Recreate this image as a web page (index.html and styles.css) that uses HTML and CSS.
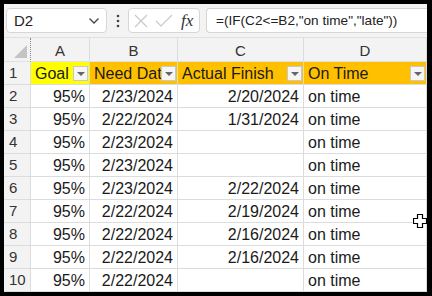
FILE: index.html
```html
<!DOCTYPE html>
<html lang="en">
<head>
  <meta charset="UTF-8">
  <title>On Time Sheet</title>
  <link rel="stylesheet" href="styles.css">
</head>
<body>
  <div class="frame">
    <div class="excel">
      <!-- formula bar -->
      <div class="fbar">
        <div class="namebox">
          <span>D2</span>
          <svg width="12" height="8" viewBox="0 0 12 8"><path d="M1.5 1.5 L6 6 L10.5 1.5" fill="none" stroke="#444" stroke-width="1.3"/></svg>
        </div>
        <div class="dots">
          <svg width="4" height="14" viewBox="0 0 4 14"><circle cx="2" cy="2" r="1.3" fill="#444"/><circle cx="2" cy="7" r="1.3" fill="#444"/><circle cx="2" cy="12" r="1.3" fill="#444"/></svg>
        </div>
        <div class="fbtns">
          <svg width="16" height="16" viewBox="0 0 16 16"><path d="M2 2 L14 14 M14 2 L2 14" stroke="#c8c8c8" stroke-width="1.2"/></svg>
          <svg width="18" height="16" viewBox="0 0 18 16"><path d="M1 8 L6 13 L17 2" fill="none" stroke="#c8c8c8" stroke-width="1.2"/></svg>
          <span class="fx">fx</span>
        </div>
        <div class="formula">=(IF(C2&lt;=B2,"on time","late"))</div>
      </div>

      <!-- sheet grid -->
      <div class="sheet">
        <div class="corner"><div class="tri"></div></div>
        <div class="colhead">A</div>
        <div class="colhead">B</div>
        <div class="colhead">C</div>
        <div class="colhead">D</div>

        <div class="rowhead">1</div>
        <div class="cell th yellow"><span>Goal</span><i class="filter"></i></div>
        <div class="cell th orange"><span>Need Date</span><i class="filter"></i></div>
        <div class="cell th orange"><span>Actual Finish</span><i class="filter"></i></div>
        <div class="cell th orange"><span>On Time</span><i class="filter"></i></div>

        <div class="rowhead">2</div><div class="cell num">95%</div><div class="cell num">2/23/2024</div><div class="cell num">2/20/2024</div><div class="cell">on time</div>
        <div class="rowhead">3</div><div class="cell num">95%</div><div class="cell num">2/22/2024</div><div class="cell num">1/31/2024</div><div class="cell">on time</div>
        <div class="rowhead">4</div><div class="cell num">95%</div><div class="cell num">2/23/2024</div><div class="cell num"></div><div class="cell">on time</div>
        <div class="rowhead">5</div><div class="cell num">95%</div><div class="cell num">2/23/2024</div><div class="cell num"></div><div class="cell">on time</div>
        <div class="rowhead">6</div><div class="cell num">95%</div><div class="cell num">2/23/2024</div><div class="cell num">2/22/2024</div><div class="cell">on time</div>
        <div class="rowhead">7</div><div class="cell num">95%</div><div class="cell num">2/22/2024</div><div class="cell num">2/19/2024</div><div class="cell">on time</div>
        <div class="rowhead">8</div><div class="cell num">95%</div><div class="cell num">2/22/2024</div><div class="cell num">2/16/2024</div><div class="cell">on time</div>
        <div class="rowhead">9</div><div class="cell num">95%</div><div class="cell num">2/22/2024</div><div class="cell num">2/16/2024</div><div class="cell">on time</div>
        <div class="rowhead">10</div><div class="cell num">95%</div><div class="cell num">2/22/2024</div><div class="cell num"></div><div class="cell">on time</div>
      </div>

      <!-- fat cross cursor -->
      <svg class="cursor" width="14" height="14" viewBox="0 0 14 14"><path d="M4.5 0.5 H9.5 V4.5 H13.5 V9.5 H9.5 V13.5 H4.5 V9.5 H0.5 V4.5 H4.5 Z" fill="#fff" stroke="#000" stroke-width="1.2"/></svg>
    </div>
  </div>
</body>
</html>
```

FILE: styles.css
```css
body {
  margin: 0;
  background: #000;
  font-family: "Liberation Sans", Arial, sans-serif;
}
.frame {
  width: 432px;
  height: 296px;
  background: #000;
  padding: 4px 5px 4px 4px;
  box-sizing: border-box;
}
.excel {
  position: relative;
  height: 100%;
  background: #fff;
  overflow: hidden;
}

/* formula bar */
.fbar {
  height: 34px;
  background: #f3f3f3;
  display: flex;
  align-items: center;
  padding-left: 2px;
  box-sizing: border-box;
  border-bottom: 1px solid #e0e0e0;
}
.namebox {
  width: 101px;
  height: 25px;
  box-sizing: border-box;
  background: #fff;
  border: 1px solid #d6d6d6;
  border-radius: 4px;
  display: flex;
  align-items: center;
  justify-content: space-between;
  padding: 0 6px 0 7px;
  font-size: 15px;
  color: #222;
}
.dots {
  width: 21px;
  display: flex;
  justify-content: center;
}
.fbtns {
  width: 72px;
  height: 25px;
  box-sizing: border-box;
  background: #fff;
  border: 1px solid #d6d6d6;
  border-radius: 4px;
  display: flex;
  align-items: center;
  gap: 6px;
  padding-left: 4px;
}
.fx {
  font-family: "Liberation Serif", serif;
  font-style: italic;
  font-size: 17px;
  color: #333;
  margin-left: 2px;
}
.formula {
  flex: 1;
  height: 25px;
  margin-left: 6px;
  box-sizing: border-box;
  background: #fff;
  border: 1px solid #d6d6d6;
  border-right: none;
  border-radius: 4px 0 0 4px;
  display: flex;
  align-items: center;
  padding-left: 9px;
  font-size: 13.6px;
  color: #222;
  white-space: nowrap;
}

/* sheet */
.sheet {
  display: grid;
  grid-template-columns: 27px 59px 88px 126px 123px;
  grid-template-rows: 24px repeat(10, 23px);
}
.corner {
  background: #f3f3f3;
  border-right: 1px dotted #888;
  border-bottom: 1px solid #e0e0e0;
  position: relative;
}
.tri {
  position: absolute;
  right: 3px;
  bottom: 3px;
  width: 0;
  height: 0;
  border-left: 13px solid transparent;
  border-bottom: 13px solid #c4c4c4;
}
.colhead {
  background: #f3f3f3;
  border-right: 1px solid #dcdcdc;
  border-bottom: 1px solid #e0e0e0;
  text-align: center;
  font-size: 15px;
  line-height: 26px;
  color: #333;
}
.rowhead {
  background: #f3f3f3;
  border-bottom: 1px solid #dcdcdc;
  border-right: 1px solid #dcdcdc;
  font-size: 15px;
  line-height: 22px;
  padding-left: 5px;
  color: #333;
}
.cell {
  border-right: 1px solid #dcdcdc;
  border-bottom: 1px solid #dcdcdc;
  font-size: 16px;
  line-height: 23px;
  padding: 0 4px;
  color: #1a1a1a;
  white-space: nowrap;
  overflow: hidden;
}
.cell.num {
  text-align: right;
}
.th {
  position: relative;
  padding-right: 0;
}
.yellow {
  background: #ffff00;
}
.orange {
  background: #ffc000;
}
.filter {
  position: absolute;
  right: 1px;
  top: 4px;
  width: 13px;
  height: 13px;
  background: #f5f5f5;
  border: 1px solid #c8c8c8;
}
.filter::after {
  content: "";
  position: absolute;
  left: 3px;
  top: 5px;
  border-left: 4px solid transparent;
  border-right: 4px solid transparent;
  border-top: 4px solid #666;
}
.cursor {
  position: absolute;
  left: 409px;
  top: 210px;
}
```
